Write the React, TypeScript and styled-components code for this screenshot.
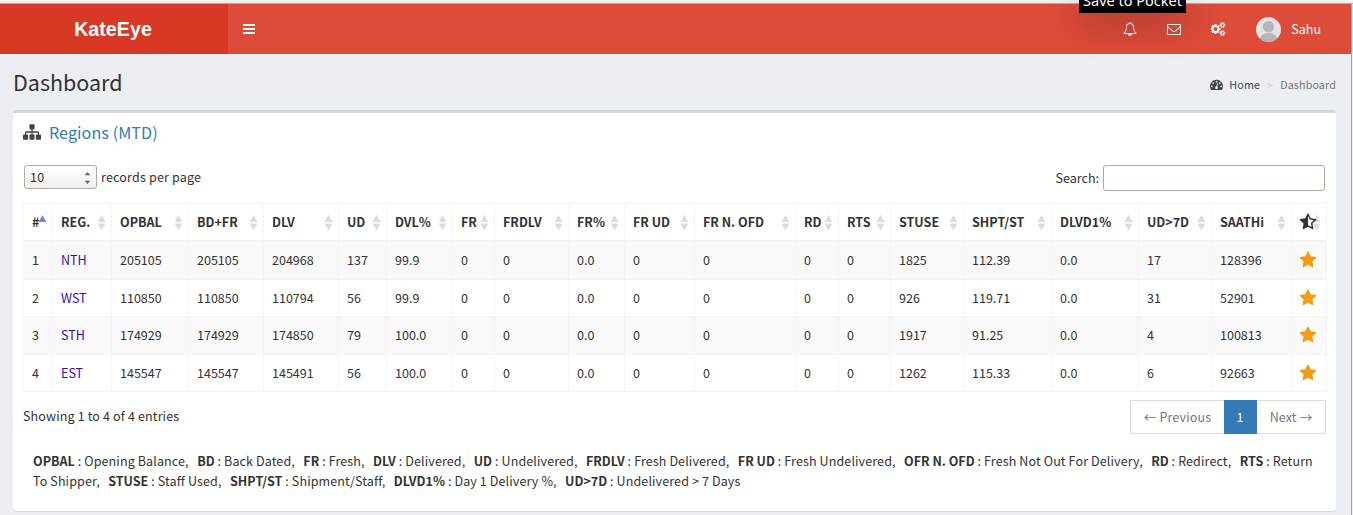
import React from "react";
import styled, { createGlobalStyle } from "styled-components";

const FONT = '"Noto Sans CJK SC", "Noto Sans", sans-serif';

const GlobalStyle = createGlobalStyle`
  * { box-sizing: border-box; }
  html, body { margin: 0; padding: 0; }
  body {
    background: #ecf0f5;
    color: #333;
    font: 400 12.54px/20px ${FONT};
    overflow: hidden;
  }
`;

const Frame = styled.div`
  height: 515px;
  display: flex;
  flex-direction: column;
  overflow: hidden;
  background: #f2f1f0;
`;
const BrowserEdge = styled.div`
  flex: none;
  height: 4px;
  border-bottom: 1px solid #b5aea6;
`;
const Page = styled.div`
  flex: 1;
  width: 1352px;
  background: #ebeef3;
  border-right: 1px solid #aaa39c;
`;
const Header = styled.header`
  height: 50px;
  display: flex;
  background: #dd4b39;
  color: #fff;
`;
const Brand = styled.div`
  width: 228px;
  padding-right: 2px;
  background: #d73925;
  text-align: center;
  font: 700 19.7px/50px "Liberation Sans", Arial, sans-serif;
`;
const MenuButton = styled.div`
  width: 44px;
  display: flex;
  align-items: center;
  padding-left: 15px;
`;
const NavIcons = styled.nav`
  margin-left: auto;
  padding-right: 30px;
  display: flex;
  align-items: center;
`;
const NavItem = styled.span<{ $w: number }>`
  width: ${(p) => p.$w}px;
  display: flex;
  justify-content: center;
`;
const User = styled.span`
  display: flex;
  align-items: center;
  gap: 10px;
  padding-left: 15px;
  line-height: 20px;
  svg { flex: none; }
`;
const Tooltip = styled.div`
  position: absolute;
  left: 1079px;
  top: 0;
  width: 107px;
  height: 13px;
  background: #000;
  color: #fff;
  box-shadow: 0 8px 36px rgba(0, 0, 0, 0.4);
  font: 400 14.5px/20px "Noto Sans", sans-serif;
  text-align: center;
  white-space: nowrap;
  clip-path: inset(0 -60px -60px -60px);
  span { display: block; margin-top: -10px; }
`;
const PageHead = styled.div`
  height: 56px;
  display: flex;
  justify-content: space-between;
  padding: 14px 15px 0 13px;
`;
const Title = styled.h1`
  margin: 0;
  font-size: 21.5px;
  font-weight: 400;
  line-height: 28px;
`;
const Crumbs = styled.div`
  display: flex;
  align-items: center;
  height: 18px;
  margin-top: 8px;
  font-size: 10.75px;
  letter-spacing: 0.12px;
  color: #777;
  svg { margin: 0 6px 1px 0; }
`;
const CrumbHome = styled.span`
  color: #444;
`;
const CrumbSep = styled.span`
  padding: 0 7px;
  color: #ccc;
`;
const Box = styled.section`
  width: 1323px;
  height: 401px;
  margin-left: 13px;
  background: #fff;
  border-top: 3px solid #d2d6de;
  border-radius: 3px;
  box-shadow: 0 1px 1px rgba(0, 0, 0, 0.1);
  padding: 0 9px 0 10px;
`;
const BoxTitle = styled.h3`
  margin: 0;
  height: 40px;
  padding-bottom: 2px;
  display: flex;
  align-items: center;
  gap: 8px;
  font-size: 16.1px;
  letter-spacing: 0.08px;
  font-weight: 400;
  line-height: 20px;
  color: #337ab7;
`;
const Tools = styled.div`
  height: 50px;
  padding: 12px 2px 0 1px;
  display: flex;
  justify-content: space-between;
`;
const Field = styled.label<{ $h: number; $spacing?: number }>`
  display: flex;
  align-items: center;
  height: ${(p) => p.$h}px;
  gap: 4px;
  letter-spacing: ${(p) => p.$spacing ?? 0}px;
`;
const Select = styled.span`
  width: 73px;
  height: 24px;
  display: flex;
  align-items: center;
  justify-content: space-between;
  padding: 0 5px;
  border: 1px solid #b4aaa0;
  border-radius: 3px;
  background: linear-gradient(#fff, #f0efee);
`;
const SearchInput = styled.input`
  width: 222px;
  height: 26px;
  border: 1px solid #b4a79c;
  border-radius: 3px;
  background: #fff;
  outline: none;
`;
const Table = styled.table`
  width: 1304px;
  table-layout: fixed;
  border-collapse: separate;
  border-spacing: 0;
  border-top: 1px solid #f4f4f4;
  border-left: 1px solid #f4f4f4;
`;
const Th = styled.th`
  height: 38px;
  padding: 0 0 0 8px;
  border-right: 1px solid #f4f4f4;
  border-bottom: 2px solid #f4f4f4;
  text-align: left;
  white-space: nowrap;
`;
const HeadCell = styled.div`
  position: relative;
  display: flex;
  align-items: center;
  height: 36px;
`;
const SortMark = styled.svg`
  position: absolute;
  right: 5px;
  top: 11px;
  z-index: 0;
`;
const HeadLabel = styled.span`
  position: relative;
  z-index: 1;
  display: flex;
  svg { margin-left: -1px; }
`;
const Row = styled.tr<{ $odd: boolean; $h: number }>`
  height: ${(p) => p.$h}px;
  background: ${(p) => (p.$odd ? "#f9f9f9" : "#fff")};
  td { padding-bottom: ${(p) => (p.$odd ? 1 : 0)}px; }
`;
const Td = styled.td`
  padding: 0 0 0 8px;
  border-right: 1px solid #f4f4f4;
  border-bottom: 1px solid #f4f4f4;
  line-height: 20px;
  vertical-align: middle;
`;
const Region = styled.a`
  color: #3c0ab4;
`;
const StarWrap = styled.span`
  display: flex;
  margin-left: -1px;
  padding-bottom: 1px;
`;
const Footer = styled.div`
  height: 59px;
  display: flex;
  justify-content: space-between;
  padding-right: 1px;
  letter-spacing: 0.13px;
`;
const Info = styled.div`
  padding-top: 14px;
`;
const Pager = styled.div`
  display: flex;
  height: 34px;
  margin-top: 8px;
`;
const PageLink = styled.span<{ $w: number; $active?: boolean }>`
  width: ${(p) => p.$w}px;
  border: 1px solid ${(p) => (p.$active ? "#337ab7" : "#ddd")};
  background: ${(p) => (p.$active ? "#337ab7" : "#fff")};
  color: ${(p) => (p.$active ? "#fff" : "#777")};
  text-align: center;
  line-height: 32px;
  white-space: nowrap;
  & + & { border-left-width: ${(p) => (p.$active ? 1 : 0)}px; }
  &:first-child { border-right-width: 0; }
`;
const Legend = styled.p`
  margin: 0;
  padding: 0 4px 0 10px;
  letter-spacing: 0.11px;
  b { letter-spacing: 0; }
`;
const Term = styled.span`
  margin-right: 5.5px;
`;

const PATHS = {
  bell: "M912 1696q0-16-16-16-59 0-101.5-42.5t-42.5-101.5q0-16-16-16t-16 16q0 73 51.5 124.5t124.5 51.5q16 0 16-16zm-666-288h1300q-266-300-266-832 0-51-24-105t-69-103-121.5-80.5-169.5-31.5-169.5 31.5-121.5 80.5-69 103-24 105q0 532-266 832zm1482 0q0 52-38 90t-90 38h-448q0 106-75 181t-181 75-181-75-75-181h-448q-52 0-90-38t-38-90q50-42 91-88t85-119.5 74.5-158.5 50-206 19.5-260q0-152 117-282.5t307-158.5q-8-19-8-39 0-40 28-68t68-28 68 28 28 68q0 20-8 39 190 28 307 158.5t117 282.5q0 139 19.5 260t50 206 74.5 158.5 85 119.5 91 88z",
  mail: "M1664 1504v-768q-32 36-69 66-268 206-426 338-51 43-83 67t-86.5 48.5-102.5 24.5h-2q-48 0-102.5-24.5t-86.5-48.5-83-67q-158-132-426-338-37-30-69-66v768q0 13 9.5 22.5t22.5 9.5h1472q13 0 22.5-9.5t9.5-22.5zm0-1051v-24.5l-.5-13-3-12.5-5.5-9-9-7.5-14-2.5h-1472q-13 0-22.5 9.5t-9.5 22.5q0 168 147 284 193 152 401 317 6 5 35 29.5t46 37.5 44.5 31.5 50.5 27.5 43 9h2q20 0 43-9t50.5-27.5 44.5-31.5 46-37.5 35-29.5q208-165 401-317 54-43 100.5-115.5t46.5-131.5zm128-37v1088q0 66-47 113t-113 47h-1472q-66 0-113-47t-47-113v-1088q0-66 47-113t113-47h1472q66 0 113 47t47 113z",
  cogs: "M832 896q0-106-75-181t-181-75-181 75-75 181 75 181 181 75 181-75 75-181zm768 512q0-52-38-90t-90-38-90 38-38 90q0 53 37.5 90.5t90.5 37.5 90.5-37.5 37.5-90.5zm0-1024q0-52-38-90t-90-38-90 38-38 90q0 53 37.5 90.5t90.5 37.5 90.5-37.5 37.5-90.5zm-384 421v185q0 10-7 19.5t-16 10.5l-155 24q-11 35-32 76 34 48 90 115 7 11 7 20 0 12-7 19-23 30-82.5 89.5t-78.5 59.5q-11 0-21-7l-115-90q-37 19-77 31-11 108-23 155-7 24-30 24h-186q-11 0-20-7.5t-10-17.5l-23-153q-34-10-75-31l-118 89q-7 7-20 7-11 0-21-8-144-133-144-160 0-9 7-19 10-14 41-53t47-61q-23-44-35-82l-152-24q-10-1-17-9.5t-7-19.5v-185q0-10 7-19.5t16-10.5l155-24q11-35 32-76-34-48-90-115-7-11-7-20 0-12 7-20 22-30 82-89t79-59q11 0 21 7l115 90q34-18 77-32 11-108 23-154 7-24 30-24h186q11 0 20 7.5t10 17.5l23 153q34 10 75 31l118-89q8-7 20-7 11 0 21 8 144 133 144 160 0 8-7 19-12 16-42 54t-45 60q23 48 34 82l152 23q10 2 17 10.5t7 19.5zm640 533v140q0 16-149 31-12 27-30 52 51 113 51 138 0 4-4 7-122 71-124 71-8 0-46-47t-52-68q-20 2-30 2t-30-2q-14 21-52 68t-46 47q-2 0-124-71-4-3-4-7 0-25 51-138-18-25-30-52-149-15-149-31v-140q0-16 149-31 13-29 30-52-51-113-51-138 0-4 4-7 4-2 35-20t59-34 30-16q8 0 46 46.5t52 67.5q20-2 30-2t30 2q51-71 92-112l6-2q4 0 124 70 4 3 4 7 0 25-51 138 17 23 30 52 149 15 149 31zm0-1024v140q0 16-149 31-12 27-30 52 51 113 51 138 0 4-4 7-122 71-124 71-8 0-46-47t-52-68q-20 2-30 2t-30-2q-14 21-52 68t-46 47q-2 0-124-71-4-3-4-7 0-25 51-138-18-25-30-52-149-15-149-31v-140q0-16 149-31 13-29 30-52-51-113-51-138 0-4 4-7 4-2 35-20t59-34 30-16q8 0 46 46.5t52 67.5q20-2 30-2t30 2q51-71 92-112l6-2q4 0 124 70 4 3 4 7 0 25-51 138 17 23 30 52 149 15 149 31z",
  gauge: "M384 1152q0-53-37.5-90.5t-90.5-37.5-90.5 37.5-37.5 90.5 37.5 90.5 90.5 37.5 90.5-37.5 37.5-90.5zm192-448q0-53-37.5-90.5t-90.5-37.5-90.5 37.5-37.5 90.5 37.5 90.5 90.5 37.5 90.5-37.5 37.5-90.5zm428 481l101-382q6-26-7.5-48.5t-38.5-29.5-48 6.5-30 39.5l-101 382q-60 5-107 43.5t-63 98.5q-20 77 20 146t117 89 146-20 89-117q16-60-6-117t-72-91zm660-33q0-53-37.5-90.5t-90.5-37.5-90.5 37.5-37.5 90.5 37.5 90.5 90.5 37.5 90.5-37.5 37.5-90.5zm-640-640q0-53-37.5-90.5t-90.5-37.5-90.5 37.5-37.5 90.5 37.5 90.5 90.5 37.5 90.5-37.5 37.5-90.5zm448 192q0-53-37.5-90.5t-90.5-37.5-90.5 37.5-37.5 90.5 37.5 90.5 90.5 37.5 90.5-37.5 37.5-90.5zm320 448q0 261-141 483-19 29-54 29h-1402q-35 0-54-29-141-221-141-483 0-182 71-348t191-286 286-191 348-71 348 71 286 191 191 286 71 348z",
  sitemap: "M1792 1248v320q0 40-28 68t-68 28h-320q-40 0-68-28t-28-68v-320q0-40 28-68t68-28h96v-192h-512v192h96q40 0 68 28t28 68v320q0 40-28 68t-68 28h-320q-40 0-68-28t-28-68v-320q0-40 28-68t68-28h96v-192h-512v192h96q40 0 68 28t28 68v320q0 40-28 68t-68 28h-320q-40 0-68-28t-28-68v-320q0-40 28-68t68-28h96v-192q0-52 38-90t90-38h512v-192h-96q-40 0-68-28t-28-68v-320q0-40 28-68t68-28h320q40 0 68 28t28 68v320q0 40-28 68t-68 28h-96v192h512q52 0 90 38t38 90v192h96q40 0 68 28t28 68z",
  star: "M1728 647q0 22-26 48l-363 354 86 500q1 7 1 20 0 21-10.5 35.5t-30.5 14.5q-19 0-40-12l-449-236-449 236q-22 12-40 12-21 0-31.5-14.5t-10.5-35.5q0-6 2-20l86-500-364-354q-25-27-25-48 0-37 56-46l502-73 225-455q19-41 49-41t49 41l225 455 502 73q56 9 56 46z",
};
const HALF_STAR = PATHS.star + "M896 300l178 358 402 59-291 284 68 400-357-188z";

type IconProps = { d: string; size: number; color?: string; vw?: number };
const Icon = ({ d, size, color = "currentColor", vw = 1792 }: IconProps) => (
  <svg width={(size * vw) / 1792} height={size} viewBox={`0 0 ${vw} 1792`} fill={color} fillRule="evenodd">
    <path d={d} />
  </svg>
);

const Bars = () => (
  <svg width="12" height="10" viewBox="0 0 12 10" fill="currentColor">
    <path d="M0 0h12v2H0zM0 4h12v2H0zM0 8h12v2H0z" />
  </svg>
);

const Avatar = () => (
  <svg width="25" height="25" viewBox="0 0 25 25">
    <defs>
      <clipPath id="avatar"><circle cx="12.5" cy="12.5" r="12.5" /></clipPath>
    </defs>
    <g clipPath="url(#avatar)">
      <rect width="25" height="25" fill="#e3e4e5" />
      <circle cx="12.5" cy="9.7" r="5.7" fill="#b3b5b7" />
      <ellipse cx="12.5" cy="22.5" rx="8.8" ry="6.6" fill="#b3b5b7" />
    </g>
  </svg>
);

const COLUMNS: [string, number][] = [
  ["#", 29], ["REG.", 59], ["OPBAL", 77], ["BD+FR", 75], ["DLV", 75], ["UD", 48], ["DVL%", 66],
  ["FR", 42], ["FRDLV", 74], ["FR%", 56], ["FR UD", 70], ["FR N. OFD", 101], ["RD", 43], ["RTS", 52],
  ["STUSE", 73], ["SHPT/ST", 88], ["DLVD1%", 87], ["UD>7D", 73], ["SAATHi", 80], ["star", 35],
];
const ROWS = [
  ["1", "NTH", "205105", "205105", "204968", "137", "99.9", "0", "0", "0.0", "0", "0", "0", "0", "1825", "112.39", "0.0", "17", "128396"],
  ["2", "WST", "110850", "110850", "110794", "56", "99.9", "0", "0", "0.0", "0", "0", "0", "0", "926", "119.71", "0.0", "31", "52901"],
  ["3", "STH", "174929", "174929", "174850", "79", "100.0", "0", "0", "0.0", "0", "0", "0", "0", "1917", "91.25", "0.0", "4", "100813"],
  ["4", "EST", "145547", "145547", "145491", "56", "100.0", "0", "0", "0.0", "0", "0", "0", "0", "1262", "115.33", "0.0", "6", "92663"],
];
const ROW_HEIGHTS = [38, 37, 38, 37];
const LEGEND: [string, string][] = [
  ["OPBAL", "Opening Balance,"], ["BD", "Back Dated,"], ["FR", "Fresh,"], ["DLV", "Delivered,"],
  ["UD", "Undelivered,"], ["FRDLV", "Fresh Delivered,"], ["FR UD", "Fresh Undelivered,"],
  ["OFR N. OFD", "Fresh Not Out For Delivery,"], ["RD", "Redirect,"], ["RTS", "Return To Shipper,"],
  ["STUSE", "Staff Used,"], ["SHPT/ST", "Shipment/Staff,"], ["DLVD1%", "Day 1 Delivery %,"],
  ["UD>7D", "Undelivered > 7 Days"],
];

const Sort = ({ first }: { first: boolean }) => (
  <SortMark width="9" height="16" viewBox="0 0 9 16">
    {first ? (
      <path d="M4.5 0L8.5 7h-8z" fill="#8080e0" />
    ) : (
      <path d="M4.5 0L8.5 7h-8zM4.5 15.5l-4-7h8z" fill="#dcdcdc" />
    )}
  </SortMark>
);

export default function App() {
  return (
    <Frame>
      <GlobalStyle />
      <BrowserEdge />
      <Page>
        <Header>
          <Brand>KateEye</Brand>
          <MenuButton><Bars /></MenuButton>
          <NavIcons>
            <NavItem $w={44}><Icon d={PATHS.bell} size={14} /></NavItem>
            <NavItem $w={44}><Icon d={PATHS.mail} size={14} /></NavItem>
            <NavItem $w={45}><Icon d={PATHS.cogs} size={14} vw={1920} /></NavItem>
            <User><Avatar />Sahu</User>
          </NavIcons>
        </Header>
        <PageHead>
          <Title>Dashboard</Title>
          <Crumbs>
            <Icon d={PATHS.gauge} size={13} color="#444" />
            <CrumbHome>Home</CrumbHome>
            <CrumbSep>&gt;</CrumbSep>
            Dashboard
          </Crumbs>
        </PageHead>
        <Box>
          <BoxTitle><Icon d={PATHS.sitemap} size={18} color="#444" />Regions (MTD)</BoxTitle>
          <Tools>
            <Field $h={24} $spacing={0.18}>
              <Select>
                10
                <svg width="7" height="14" viewBox="0 0 7 14" fill="#666">
                  <path d="M3.5 2L6.3 5.3H.7zM3.5 14L.7 10.7h5.6z" />
                </svg>
              </Select>
              records per page
            </Field>
            <Field $h={26}>Search: <SearchInput /></Field>
          </Tools>
          <Table>
            <colgroup>
              {COLUMNS.map(([name, w]) => <col key={name} width={w} />)}
            </colgroup>
            <thead>
              <tr>
                {COLUMNS.map(([name], i) => (
                  <Th key={name}>
                    <HeadCell>
                      <Sort first={i === 0} />
                      <HeadLabel>{name === "star" ? <Icon d={HALF_STAR} size={18} /> : name}</HeadLabel>
                    </HeadCell>
                  </Th>
                ))}
              </tr>
            </thead>
            <tbody>
              {ROWS.map((row, r) => (
                <Row key={row[0]} $odd={r % 2 === 0} $h={ROW_HEIGHTS[r]}>
                  {row.map((value, c) => <Td key={c}>{c === 1 ? <Region>{value}</Region> : value}</Td>)}
                  <Td><StarWrap><Icon d={PATHS.star} size={18} color="#f39c12" /></StarWrap></Td>
                </Row>
              ))}
            </tbody>
          </Table>
          <Footer>
            <Info>Showing 1 to 4 of 4 entries</Info>
            <Pager>
              <PageLink $w={94}>← Previous</PageLink>
              <PageLink $w={33} $active>1</PageLink>
              <PageLink $w={69}>Next →</PageLink>
            </Pager>
          </Footer>
          <Legend>
            {LEGEND.map(([term, text]) => (
              <React.Fragment key={term}>
                <Term><b>{term}</b> : {text}</Term>{" "}
              </React.Fragment>
            ))}
          </Legend>
        </Box>
      </Page>
      <Tooltip><span>Save to Pocket</span></Tooltip>
    </Frame>
  );
}
